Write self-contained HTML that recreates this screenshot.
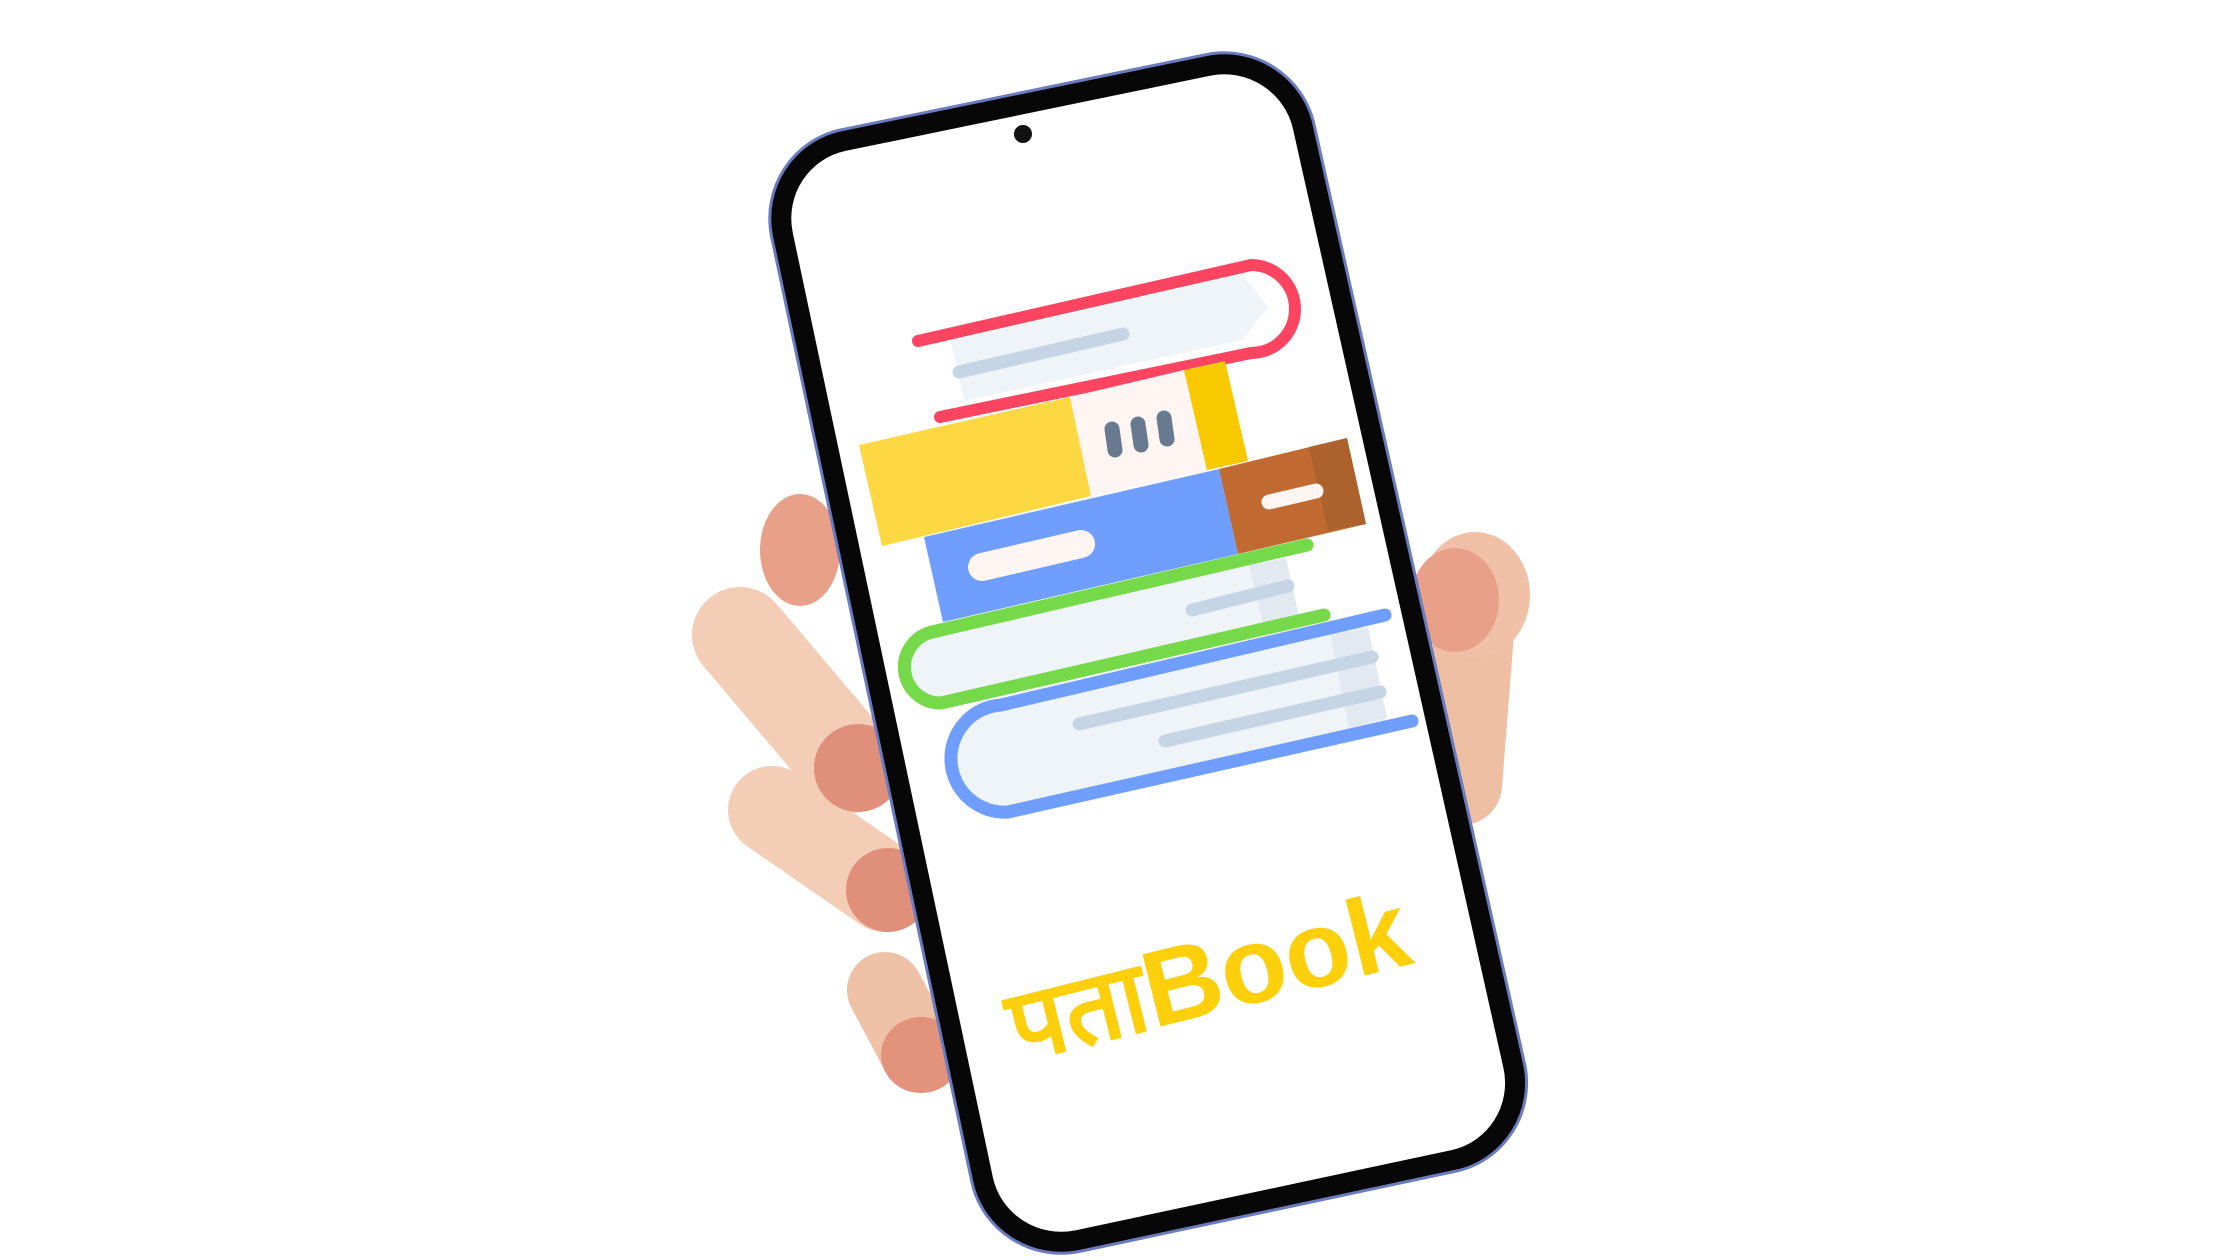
<!DOCTYPE html>
<html><head><meta charset="utf-8"><style>
html,body{margin:0;padding:0;background:#fff;width:2240px;height:1260px;overflow:hidden}
svg{display:block}
</style></head><body>
<svg width="2240" height="1260" viewBox="0 0 2240 1260" xmlns="http://www.w3.org/2000/svg">
<!-- hand -->
<g stroke-linecap="round" fill="none">
  <line x1="740" y1="635" x2="850" y2="765" stroke="#f3cdb6" stroke-width="96"/>
  <line x1="772" y1="810" x2="885" y2="888" stroke="#f3cdb6" stroke-width="88"/>
  <line x1="885" y1="990" x2="918" y2="1052" stroke="#efc1a6" stroke-width="76"/>
  <line x1="1475" y1="620" x2="1462" y2="785" stroke="#efbfa3" stroke-width="80"/>
</g>
<ellipse cx="1475" cy="595" rx="55" ry="63" fill="#f0c1a6"/>
<ellipse cx="1455" cy="600" rx="44" ry="52" fill="#e8a088"/>
<ellipse cx="800" cy="550" rx="40" ry="56" fill="#e8a088"/>
<ellipse cx="858" cy="768" rx="44" ry="44" fill="#e0907a"/>
<ellipse cx="888" cy="890" rx="42" ry="42" fill="#e0907a"/>
<ellipse cx="921" cy="1055" rx="40" ry="38" fill="#e3927c"/>
<!-- phone -->
<path id="ph" d="M844 141 L1208 66 C1251 57 1294 85 1303 128 L1513 1065 C1523 1108 1496 1151 1453 1160 L1078 1240 C1035 1249 992 1222 983 1179 L783 235 C774 192 801 150 844 141 Z" fill="#fff" stroke="#6a7cc0" stroke-width="26" stroke-linejoin="round"/>
<path d="M844 141 L1208 66 C1251 57 1294 85 1303 128 L1513 1065 C1523 1108 1496 1151 1453 1160 L1078 1240 C1035 1249 992 1222 983 1179 L783 235 C774 192 801 150 844 141 Z" fill="#fff" stroke="#070707" stroke-width="20" stroke-linejoin="round"/>
<circle cx="1023" cy="134" r="9" fill="#111"/>
<!-- books -->
<g stroke-linecap="round">
  <!-- red book -->
  <polygon points="951,341 1242,274 1268,307 1242,340 964,401" fill="#eff4f9"/>
  <line x1="959" y1="372" x2="1123" y2="334" stroke="#c5d5e6" stroke-width="13"/>
  <path d="M918 341 L1251 265 A44 44 0 0 1 1251 353 L940 417" fill="none" stroke="#fd4561" stroke-width="12"/>
  <!-- yellow book -->
  <polygon points="859,445 1070,397 1091,496 882,546" fill="#fed843"/>
  <polygon points="1070,397 1184,370 1207,470 1091,496" fill="#fff5f3"/>
  <polygon points="1184,370 1225,361 1248,461 1207,470" fill="#f9c900"/>
  <line x1="1112" y1="429" x2="1115" y2="450" stroke="#687a90" stroke-width="15"/>
  <line x1="1138" y1="424" x2="1141" y2="445" stroke="#687a90" stroke-width="15"/>
  <line x1="1164" y1="418" x2="1167" y2="439" stroke="#687a90" stroke-width="15"/>
  <!-- blue book -->
  <polygon points="924,537 1219,469 1238,554 943,622" fill="#6f9eff"/>
  <line x1="982" y1="567" x2="1081" y2="544" stroke="#fff5f3" stroke-width="28"/>
  <!-- brown book -->
  <polygon points="1219,469 1347,438 1366,524 1238,554" fill="#c06a31"/>
  <polygon points="1309,447 1347,438 1366,524 1328,531" fill="#ad612c"/>
  <line x1="1269" y1="502" x2="1316" y2="491" stroke="#fff5f3" stroke-width="15"/>
  <!-- green book -->
  <path d="M932 632 L1260 556 L1300 617 L941 703 A36 36 0 0 1 932 632 Z" fill="#eff4f9"/>
  <polygon points="1249,565 1286,558 1299,617 1263,623" fill="#e2e9f1"/>
  <line x1="1192" y1="610" x2="1288" y2="586" stroke="#c5d5e6" stroke-width="13"/>
  <path d="M1307 545 L932 632 A36 36 0 0 0 941 703 L1324 615" fill="none" stroke="#76d94a" stroke-width="13"/>
  <!-- blue bottom book -->
  <path d="M1001 705 L1360 621 L1388 730 L1008 812 A53 53 0 0 1 1001 705 Z" fill="#eff4f9"/>
  <polygon points="1330,634 1368,627 1387,718 1349,728" fill="#e2e9f1"/>
  <line x1="1079" y1="724" x2="1372" y2="657" stroke="#c5d5e6" stroke-width="13"/>
  <line x1="1165" y1="741" x2="1380" y2="692" stroke="#c5d5e6" stroke-width="13"/>
  <path d="M1385 615 L1001 705 A53 53 0 0 0 1008 812 L1412 721" fill="none" stroke="#6f9eff" stroke-width="13"/>
</g>
<!-- text -->
<text x="1018" y="1062" transform="rotate(-14 1018 1062)" font-family="'Liberation Sans', 'DejaVu Sans', sans-serif" font-weight="bold" font-size="108" fill="#fdd00b"><tspan font-size="100">पता</tspan>Book</text>
</svg>
</body></html>
